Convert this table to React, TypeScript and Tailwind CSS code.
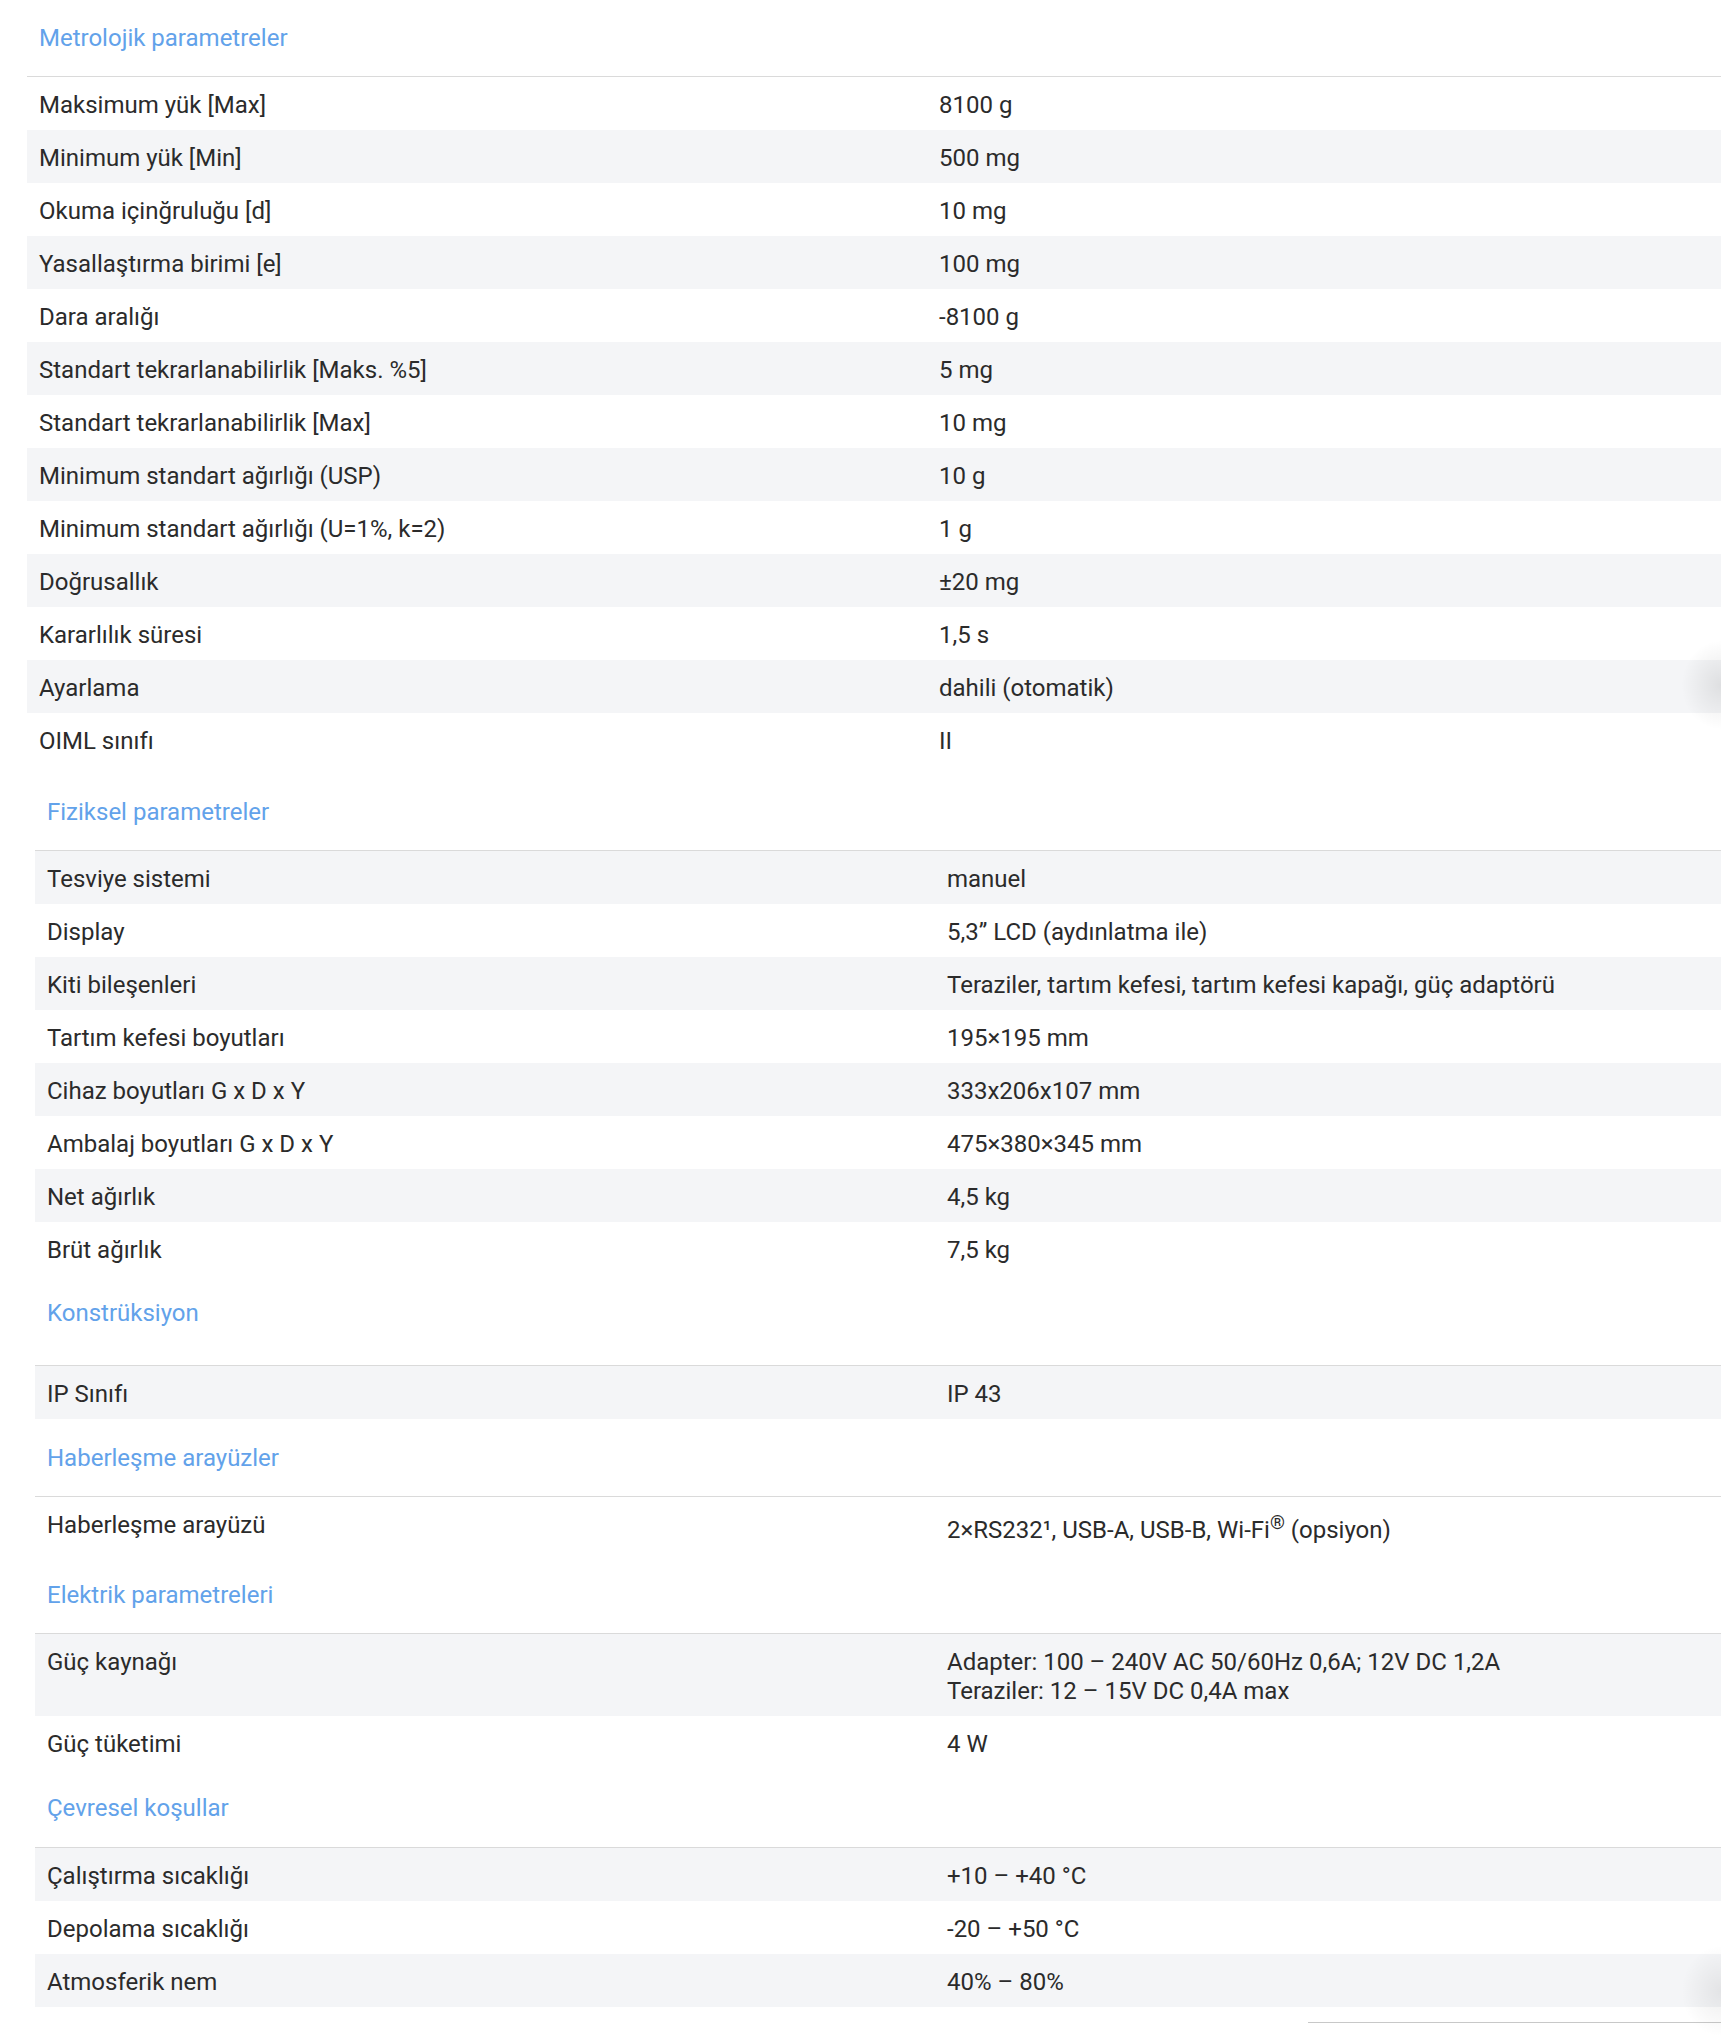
import type { ReactNode } from "react";

type Row = [string, ReactNode];

type Section = {
  title: string;
  rows: Row[];
  wrap: string;
  head: string;
  grayFirst: boolean;
};

const sections: Section[] = [
  {
    title: "Metrolojik parametreler",
    wrap: "ml-[27px]",
    head: "pt-6 pb-[23px]",
    grayFirst: false,
    rows: [
      ["Maksimum yük [Max]", "8100 g"],
      ["Minimum yük [Min]", "500 mg"],
      ["Okuma içinğruluğu [d]", "10 mg"],
      ["Yasallaştırma birimi [e]", "100 mg"],
      ["Dara aralığı", "-8100 g"],
      ["Standart tekrarlanabilirlik [Maks. %5]", "5 mg"],
      ["Standart tekrarlanabilirlik [Max]", "10 mg"],
      ["Minimum standart ağırlığı (USP)", "10 g"],
      ["Minimum standart ağırlığı (U=1%, k=2)", "1 g"],
      ["Doğrusallık", "±20 mg"],
      ["Kararlılık süresi", "1,5 s"],
      ["Ayarlama", "dahili (otomatik)"],
      ["OIML sınıfı", "II"],
    ],
  },
  {
    title: "Fiziksel parametreler",
    wrap: "ml-[35px] mt-2",
    head: "pt-6 pb-[23px]",
    grayFirst: true,
    rows: [
      ["Tesviye sistemi", "manuel"],
      ["Display", "5,3” LCD (aydınlatma ile)"],
      ["Kiti bileşenleri", "Teraziler, tartım kefesi, tartım kefesi kapağı, güç adaptörü"],
      ["Tartım kefesi boyutları", "195×195 mm"],
      ["Cihaz boyutları G x D x Y", "333x206x107 mm"],
      ["Ambalaj boyutları G x D x Y", "475×380×345 mm"],
      ["Net ağırlık", "4,5 kg"],
      ["Brüt ağırlık", "7,5 kg"],
    ],
  },
  {
    title: "Konstrüksiyon",
    wrap: "ml-[35px]",
    head: "pt-6 pb-[37px]",
    grayFirst: true,
    rows: [["IP Sınıfı", "IP 43"]],
  },
  {
    title: "Haberleşme arayüzler",
    wrap: "ml-[35px]",
    head: "pt-[25px] pb-[23px]",
    grayFirst: false,
    rows: [
      [
        "Haberleşme arayüzü",
        <span className="inline-block pt-[5px] pb-[2px]">
          2×RS232¹, USB-A, USB-B, Wi-Fi<sup className="text-[19px]">®</sup> (opsiyon)
        </span>,
      ],
    ],
  },
  {
    title: "Elektrik parametreleri",
    wrap: "ml-[35px]",
    head: "pt-6 pb-[23px]",
    grayFirst: true,
    rows: [
      [
        "Güç kaynağı",
        <>
          Adapter: 100 – 240V AC 50/60Hz 0,6A; 12V DC 1,2A
          <br />
          Teraziler: 12 – 15V DC 0,4A max
        </>,
      ],
      ["Güç tüketimi", "4 W"],
    ],
  },
  {
    title: "Çevresel koşullar",
    wrap: "ml-[35px]",
    head: "pt-[25px] pb-6",
    grayFirst: true,
    rows: [
      ["Çalıştırma sıcaklığı", "+10 – +40 °C"],
      ["Depolama sıcaklığı", "-20 – +50 °C"],
      ["Atmosferik nem", "40% – 80%"],
    ],
  },
];

function SpecSection({ s }: { s: Section }) {
  return (
    <section className={s.wrap}>
      <h3 className={`px-3 text-[#62a2ea] font-normal ${s.head}`}>{s.title}</h3>
      <div className="border-t border-[#dadada]">
        {s.rows.map(([label, value], i) => {
          const gray = s.grayFirst ? i % 2 === 0 : i % 2 === 1;
          return (
            <div
              key={label}
              className={`grid grid-cols-[900px_1fr] ${gray ? "bg-[#f4f5f7]" : "bg-white"}`}
            >
              <div className="px-3 pt-[14px] pb-[10px]">{label}</div>
              <div className="px-3 pt-[14px] pb-[10px]">{value}</div>
            </div>
          );
        })}
      </div>
    </section>
  );
}

export default function App() {
  return (
    <div className="relative min-h-[2037px] overflow-hidden bg-white font-['Roboto',sans-serif] text-[24px] leading-[29px] text-[#2b2b2b]">
      {sections.map((s) => (
        <SpecSection key={s.title} s={s} />
      ))}
      <div className="ml-[1308px] mt-[15px] h-px bg-[#c8c8c8]" />

      <div className="pointer-events-none absolute right-0 top-[640px] h-[90px] w-[40px] bg-[radial-gradient(ellipse_at_right,rgba(0,0,0,0.09),transparent_70%)]" />
      <div className="pointer-events-none absolute right-0 top-[1945px] h-[92px] w-[40px] bg-[radial-gradient(ellipse_at_right,rgba(0,0,0,0.07),transparent_70%)]" />
    </div>
  );
}
